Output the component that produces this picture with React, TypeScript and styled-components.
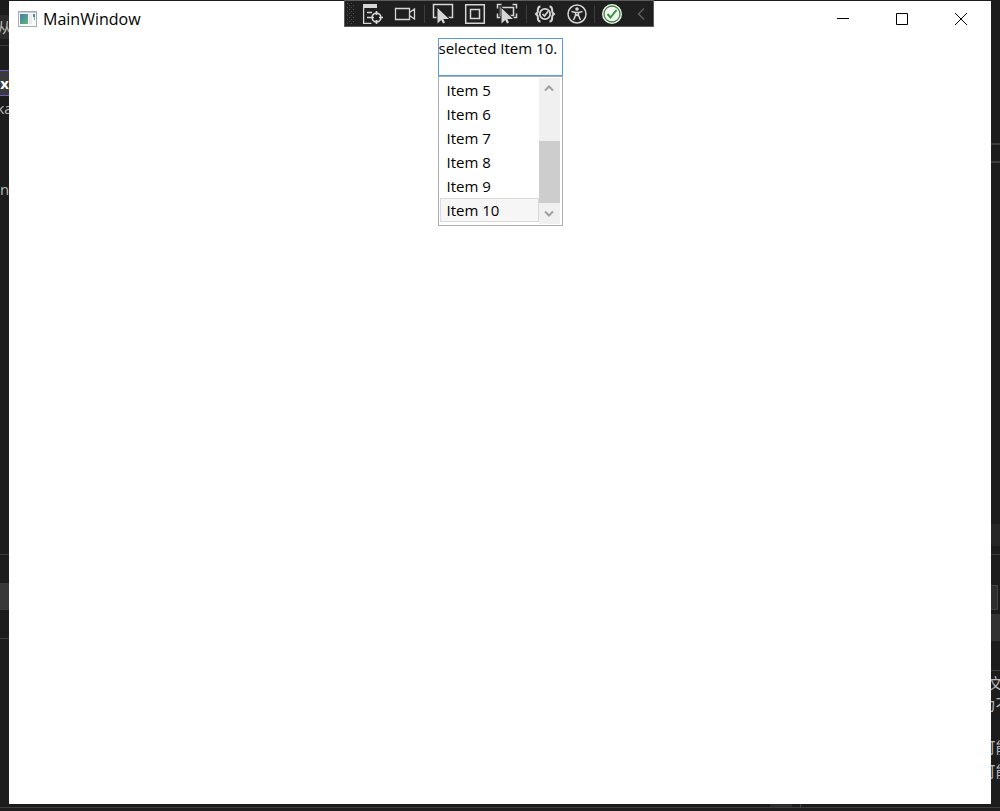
import React, { useState } from "react";
import styled, { createGlobalStyle } from "styled-components";

const GlobalStyle = createGlobalStyle`
  *, *::before, *::after { box-sizing: border-box; }
  body {
    margin: 0;
    background: #1c1c1c;
    color: #000;
    font: 15px/24px "Open Sans", "Noto Sans CJK SC", sans-serif;
  }
  button { padding: 0; border: 0; background: none; color: inherit; font: inherit; }
  svg { display: block; }
`;

const Desktop = styled.div`
  display: grid;
  grid-template-columns: 9px minmax(0, 1fr) 9px;
  grid-template-rows: minmax(0, 1fr) 7px;
  height: 100vh;
  padding-top: 1px;
  overflow: hidden;
`;

const Edge = styled.div`
  display: flex;
  flex-direction: column;
  min-width: 0;
  overflow: hidden;
  color: #b8b8b8;
  white-space: nowrap;
`;

const Gap = styled.div<{ $h: number }>`
  flex: none;
  height: ${(p) => p.$h}px;
`;

const Rule = styled.div<{ $thick?: boolean }>`
  flex: none;
  height: ${(p) => (p.$thick ? 2 : 1)}px;
  background: #3d3d3d;
`;

const Band = styled.div<{ $h: number; $bg: string }>`
  flex: none;
  height: ${(p) => p.$h}px;
  background: ${(p) => p.$bg};
`;

const FieldEnd = styled.div`
  flex: none;
  height: 25px;
  margin-right: 2px;
  border: 1px solid #424242;
  border-left: 0;
  background: #2e2e2e;
`;

const EdgeLine = styled.div<{ $h?: number; $bg?: string }>`
  display: flex;
  flex: none;
  align-items: center;
  justify-content: center;
  height: ${(p) => p.$h ?? 24}px;
  background: ${(p) => p.$bg ?? "transparent"};
`;

const ActiveTab = styled(EdgeLine)`
  border-top: 1px solid #6f5bd0;
  border-bottom: 1px solid #6f5bd0;
  background: #3a3a3a;
  color: #fff;
  font-weight: 700;
`;

const StatusEdge = styled.div`
  grid-column: 1 / -1;
  display: flex;
  justify-content: flex-end;
  border-bottom: 3px solid #211c1e;
  box-shadow: inset 0 -1px #3d3d3d;
`;

const StatusThumb = styled.div`
  width: 22px;
  height: 3px;
  margin-right: 8px;
  background: #2c2c2c;
`;

const StatusPane = styled.div`
  width: 200px;
  border-left: 1px solid #444;
`;

const Window = styled.main`
  position: relative;
  display: flex;
  flex-direction: column;
  min-width: 0;
  background: #fff;
`;

const TitleBar = styled.header`
  display: flex;
  align-items: center;
  justify-content: space-between;
  flex: none;
  height: 37px;
  padding: 0 1px 1px 9px;
`;

const Title = styled.h1`
  display: flex;
  align-items: center;
  gap: 6px;
  margin: 0;
  font-size: 16px;
  font-weight: 400;
`;

const Captions = styled.div`
  display: flex;
`;

const CaptionButton = styled.button`
  display: grid;
  place-items: center;
  width: 59px;
  height: 36px;
`;

const DebugBar = styled.div`
  position: absolute;
  top: -1px;
  left: 50%;
  display: flex;
  align-items: center;
  width: 310px;
  height: 27px;
  margin-left: -156px;
  border: 1px solid #5c5c5c;
  background: #1f1f1f;
  color: #d6d6d6;
`;

const Grip = styled.div`
  width: 12px;
  padding-left: 2px;
`;

const ToolButton = styled.button`
  display: grid;
  place-items: center;
  width: 32px;
  height: 25px;
`;

const CollapseButton = styled(ToolButton)`
  flex: 1;
  width: auto;
  color: #626262;
`;

const Separator = styled.div<{ $tight?: boolean }>`
  display: flex;
  justify-content: center;
  width: ${(p) => (p.$tight ? 3 : 6)}px;
  &::before {
    content: "";
    width: 1px;
    height: 18px;
    background: #3d3d3d;
  }
`;

const Panel = styled.section`
  display: flex;
  flex-direction: column;
  align-self: center;
  width: 125px;
`;

const Output = styled.textarea`
  display: block;
  width: 100%;
  height: 38px;
  padding: 0;
  border: 1px solid #569de5;
  border-radius: 0;
  outline: none;
  resize: none;
  overflow: hidden;
  background: #fff;
  color: #000;
  font: 15px/18px "Open Sans", sans-serif;
  white-space: pre;
`;

const ListFrame = styled.div`
  display: flex;
  height: 150px;
  padding: 1px 2px 1px 1px;
  border: 1px solid #abadb3;
`;

const List = styled.select`
  appearance: none;
  flex: 1;
  min-width: 0;
  height: 146px;
  padding: 0;
  border: 0;
  border-radius: 0;
  outline: none;
  overflow: hidden;
  background: #fff;
  color: #000;
  font: 15px/22px "Open Sans", sans-serif;
  &::-webkit-scrollbar { display: none; }
`;

const Item = styled.option`
  height: 24px;
  min-height: 24px;
  padding: 1px 6px 0;
  border: 1px solid transparent;
  color: #000;
  line-height: 22px;
  &:checked {
    border-color: #dadada;
    background: #f6f6f6 linear-gradient(#f6f6f6, #f6f6f6);
    color: #000;
    -webkit-text-fill-color: #000;
  }
`;

const ScrollBar = styled.div`
  display: flex;
  flex-direction: column;
  width: 21px;
  background: #f0f0f0;
`;

const ScrollArrow = styled.button`
  display: grid;
  place-items: center;
  flex: none;
  height: 21px;
  color: #a0a0a0;
`;

const Track = styled.div`
  display: flex;
  flex: 1;
  align-items: flex-end;
`;

const Thumb = styled.div`
  width: 100%;
  height: 60%;
  background: #cdcdcd;
`;

type DrawProps = { children: React.ReactNode };

const Draw = ({ children }: DrawProps) => (
  <svg width="22" height="22" viewBox="0 0 22 22" fill="none" stroke="currentColor" strokeWidth="1.3" aria-hidden="true">
    {children}
  </svg>
);

const AppIcon = () => (
  <svg width="19" height="16" viewBox="0 0 19 16" aria-hidden="true">
    <defs>
      <linearGradient id="pane" x1="0" y1="0" x2="1" y2="1">
        <stop offset="0" stopColor="#427fa8" />
        <stop offset="1" stopColor="#5cb878" />
      </linearGradient>
    </defs>
    <rect x="0.5" y="0.5" width="18" height="15" fill="#f8f9fa" stroke="#a5adb3" />
    <path d="M1 1.5h17" stroke="#c6ccd1" />
    <rect x="2" y="3" width="8" height="10" fill="url(#pane)" />
    <rect x="11" y="3" width="3" height="10" fill="#e8eaec" />
    <rect x="15" y="3" width="2" height="3" fill="#4a86ae" />
    <rect x="16" y="6" width="1" height="3" fill="#68b98a" />
  </svg>
);

const Dots = () => (
  <svg width="7" height="21" viewBox="0 0 7 21" fill="#525252" aria-hidden="true">
    {[0, 4, 8, 12, 16, 20].map((y) => (
      <React.Fragment key={y}>
        <rect x="0" y={y} width="1" height="1" />
        <rect x="4" y={y} width="1" height="1" />
        <rect x="2" y={y - 2} width="1" height="1" />
        <rect x="6" y={y - 2} width="1" height="1" />
      </React.Fragment>
    ))}
  </svg>
);

const Pointer = () => (
  <path
    d="M5.5 5v15.5l3.700-3.500 1.800 3.500 2-1-1.600-3.500h5.600z"
    fill="currentColor"
    stroke="#1f1f1f"
    strokeWidth="2"
    paintOrder="stroke"
  />
);

function DebugToolbar() {
  return (
    <DebugBar role="toolbar" aria-label="Debug tools">
      <Grip><Dots /></Grip>
      <ToolButton aria-label="Go to live visual tree">
        <Draw>
          <path d="M1 1h14v4H1z" fill="currentColor" stroke="none" />
          <path d="M1.6 5v15.4h7.8M5 9.5h5M5 14.5h3" />
          <circle cx="14.5" cy="14.5" r="4.4" strokeWidth="1.6" />
          <path d="M14.5 8v4M14.5 17v4M8 14.5h4M17 14.5h4" strokeWidth="1.6" />
        </Draw>
      </ToolButton>
      <ToolButton aria-label="Show in preview">
        <Draw>
          <path d="M1.5 5.5h14v11h-14zM15.5 9.5l5-3.5v10l-5-3.5" />
        </Draw>
      </ToolButton>
      <Separator />
      <ToolButton aria-label="Select element">
        <Draw>
          <path d="M5 14.5H1.500v-13h19v13H15" strokeWidth="1.500" />
          <Pointer />
        </Draw>
      </ToolButton>
      <ToolButton aria-label="Display layout adorners">
        <Draw>
          <path d="M1.7 1.7h18.6v18.6H1.7zM6.5 6.5h9v9h-9z" strokeWidth="1.5" />
        </Draw>
      </ToolButton>
      <ToolButton aria-label="Track focused element">
        <Draw>
          <path d="M1.5 5.5v-4h4M16.5 1.500h4v4M1.500 10.500v4h3M17.500 14.500h3v-4M5 12.500H4.500v-8h13v8H14" strokeWidth="1.500" />
          <Pointer />
        </Draw>
      </ToolButton>
      <Separator />
      <ToolButton aria-label="Binding failures">
        <Draw>
          <path d="M6.500 3.500C2.500 3.500 4.500 8 3.500 9.500L2 11l1.500 1.500c1 1.500-1 6 3 6M15.500 3.500c4 0 2 4.500 3 6L20 11l-1.500 1.500c-1 1.500 1 6-3 6" strokeWidth="2" />
          <circle cx="11" cy="11" r="5.200" strokeWidth="1.800" />
          <path d="M8.500 11l2 2L14 8.500" strokeWidth="1.700" />
        </Draw>
      </ToolButton>
      <ToolButton aria-label="Scan for accessibility issues">
        <Draw>
          <circle cx="11" cy="11" r="9" strokeWidth="1.500" />
          <circle cx="11" cy="6" r="1.800" fill="currentColor" stroke="none" />
          <path d="M5.500 8.500l4 1v3L7.500 17M16.500 8.500l-4 1v3l2 4.500M9.500 9.500h3M9.500 13l1.500-1 1.500 1" strokeWidth="1.500" />
        </Draw>
      </ToolButton>
      <Separator $tight />
      <ToolButton aria-label="Hot reload is ready">
        <Draw>
          <circle cx="11" cy="11" r="10" fill="#f4f4f4" stroke="none" />
          <circle cx="11" cy="11" r="8" stroke="#388a34" strokeWidth="1.300" />
          <path d="M6.500 11l3 3.500L15.500 7" stroke="#2f9632" strokeWidth="2" />
        </Draw>
      </ToolButton>
      <CollapseButton aria-label="Collapse toolbar">
        <svg width="8" height="12" viewBox="0 0 8 12" fill="none" stroke="currentColor" strokeWidth="1.300" aria-hidden="true">
          <path d="M7 .5L1.500 6 7 11.500" />
        </svg>
      </CollapseButton>
    </DebugBar>
  );
}

const items = ["Item 5", "Item 6", "Item 7", "Item 8", "Item 9", "Item 10"];

export default function App() {
  const [selected, setSelected] = useState("Item 10");

  return (
    <>
      <GlobalStyle />
      <Desktop>
        <Edge>
          <Gap $h={14} />
          <EdgeLine $bg="#2b2b2b">从</EdgeLine>
          <Gap $h={6} />
          <Rule />
          <Gap $h={24} />
          <ActiveTab $h={26}>x</ActiveTab>
          <EdgeLine>ka</EdgeLine>
          <Gap $h={57} />
          <EdgeLine>n</EdgeLine>
          <Gap $h={353} />
          <Rule />
          <Gap $h={28} />
          <Band $h={26} $bg="#383838" />
          <Rule />
          <Gap $h={28} />
          <Rule />
        </Edge>

        <Window>
          <TitleBar>
            <Title><AppIcon />MainWindow</Title>
            <Captions>
              <CaptionButton aria-label="Minimize">
                <svg width="12" height="12" stroke="#000" aria-hidden="true"><path d="M0 5.500h12" /></svg>
              </CaptionButton>
              <CaptionButton aria-label="Maximize">
                <svg width="12" height="12" stroke="#000" fill="none" aria-hidden="true"><path d="M.5.5h11v11H.5z" /></svg>
              </CaptionButton>
              <CaptionButton aria-label="Close">
                <svg width="12" height="12" stroke="#000" aria-hidden="true"><path d="M0 0l12 12M12 0L0 12" /></svg>
              </CaptionButton>
            </Captions>
          </TitleBar>
          <DebugToolbar />
          <Panel>
            <Output aria-label="Output" readOnly value={`selected ${selected}.`} />
            <ListFrame>
              <List aria-label="Items" size={6} value={selected} onChange={(e) => setSelected(e.target.value)}>
                {items.map((name) => <Item key={name} value={name}>{name}</Item>)}
              </List>
              <ScrollBar>
                <ScrollArrow aria-label="Scroll up">
                  <svg width="10" height="7" fill="none" stroke="currentColor" strokeWidth="2" aria-hidden="true"><path d="M1 5.500l4-4 4 4" /></svg>
                </ScrollArrow>
                <Track><Thumb /></Track>
                <ScrollArrow aria-label="Scroll down">
                  <svg width="10" height="7" fill="none" stroke="currentColor" strokeWidth="2" aria-hidden="true"><path d="M1 1.500l4 4 4-4" /></svg>
                </ScrollArrow>
              </ScrollBar>
            </ListFrame>
          </Panel>
        </Window>

        <Edge>
          <Gap $h={142} />
          <Rule $thick />
          <Gap $h={16} />
          <Rule $thick />
          <Gap $h={361} />
          <Band $h={22} $bg="#262626" />
          <Gap $h={8} />
          <Rule />
          <Gap $h={30} />
          <FieldEnd />
          <Gap $h={4} />
          <Band $h={27} $bg="#333333" />
          <Gap $h={29} />
          <Rule />
          <EdgeLine>文</EdgeLine>
          <EdgeLine $h={18}>为不</EdgeLine>
          <Gap $h={22} />
          <EdgeLine>可能</EdgeLine>
          <EdgeLine>可能</EdgeLine>
        </Edge>

        <StatusEdge>
          <StatusThumb />
          <StatusPane />
        </StatusEdge>
      </Desktop>
    </>
  );
}
